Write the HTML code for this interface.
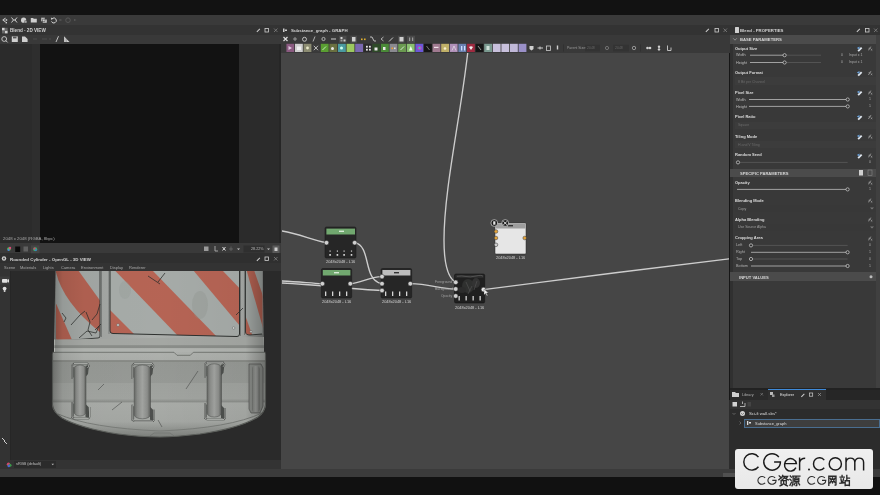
<!DOCTYPE html>
<html><head><meta charset="utf-8">
<style>
*{margin:0;padding:0;box-sizing:border-box}
html,body{width:880px;height:495px;overflow:hidden;background:#161616;font-family:"Liberation Sans",sans-serif;color:#c8c8c8}
.a{position:absolute}
.t{position:absolute;white-space:nowrap;will-change:transform;font-size:4px;line-height:5px}
.b{font-weight:bold}
</style></head><body>
<!-- top title bar -->
<div class="a" style="left:0;top:0;width:880px;height:15px;background:#121212"></div>
<!-- main toolbar -->
<div class="a" style="left:0;top:15px;width:880px;height:10px;background:#3a3a3a"></div>

<!-- LEFT PANEL -->
<div class="a" style="left:0;top:25px;width:281px;height:10px;background:#333"></div>
<div class="a" style="left:0;top:35px;width:281px;height:9px;background:#393939"></div>
<div class="a" style="left:0;top:44px;width:281px;height:199px;background:#2b2b2b"></div><div class="a" style="left:32px;top:44px;width:8px;height:199px;background:#2e2e2e"></div><div class="a" style="left:278.8px;top:44px;width:2.2px;height:199px;background:#262626"></div>
<div class="a" style="left:40px;top:44px;width:199px;height:199px;background:#121212"></div>
<div class="a" style="left:0;top:243px;width:281px;height:10px;background:#3a3a3a"></div>
<div class="a" style="left:0;top:253px;width:281px;height:10px;background:#2f2f2f"></div>
<div class="a" style="left:0;top:263px;width:281px;height:8px;background:#333"></div>
<div class="a" style="left:0;top:271px;width:281px;height:189px;background:#2a2a2a"></div>
<div class="a" style="left:0;top:271px;width:10px;height:189px;background:#353535"></div>
<div class="a" style="left:0;top:459.5px;width:281px;height:10px;background:#333"></div>


<!-- 3D viewport content -->
<svg class="a" style="left:0;top:271px" width="281" height="189" viewBox="0 271 281 189">
<defs>
<linearGradient id="cylH" x1="52" x2="267" y1="0" y2="0" gradientUnits="userSpaceOnUse">
<stop offset="0" stop-color="#7d807d"/><stop offset="0.06" stop-color="#9ea19e"/><stop offset="0.45" stop-color="#b0b3b0"/><stop offset="0.88" stop-color="#aaadaa"/><stop offset="1" stop-color="#7a7d7a"/>
</linearGradient>
<linearGradient id="shadeH" x1="52" x2="267" y1="0" y2="0" gradientUnits="userSpaceOnUse">
<stop offset="0" stop-color="#000" stop-opacity="0.3"/><stop offset="0.05" stop-color="#000" stop-opacity="0.1"/><stop offset="0.15" stop-color="#000" stop-opacity="0.04"/><stop offset="0.5" stop-color="#000" stop-opacity="0.03"/><stop offset="0.9" stop-color="#000" stop-opacity="0.06"/><stop offset="1" stop-color="#000" stop-opacity="0.3"/>
</linearGradient>
<linearGradient id="baseV" x1="0" x2="0" y1="352" y2="437" gradientUnits="userSpaceOnUse">
<stop offset="0" stop-color="#b3b6b2"/><stop offset="0.1" stop-color="#b0b3af"/><stop offset="0.11" stop-color="#999c98"/><stop offset="0.36" stop-color="#9b9e9a"/><stop offset="0.37" stop-color="#a3a6a2"/><stop offset="0.55" stop-color="#a5a8a4"/><stop offset="0.585" stop-color="#8e918d"/><stop offset="0.6" stop-color="#adb0ac"/><stop offset="0.82" stop-color="#a9aca8"/><stop offset="0.86" stop-color="#a0a39f"/><stop offset="1" stop-color="#7f827e"/>
</linearGradient>
<linearGradient id="bar" x1="0" x2="1" y1="0" y2="0">
<stop offset="0" stop-color="#6a6c69"/><stop offset="0.2" stop-color="#8e908d"/><stop offset="0.5" stop-color="#a6a8a5"/><stop offset="0.8" stop-color="#8f918e"/><stop offset="1" stop-color="#5e605d"/>
</linearGradient>
<clipPath id="cpC"><path d="M110 270 H239.5 V334 Q239.5 336.5 237 336.5 L113 333.5 Q110 333.5 110 331 Z"/></clipPath>
<clipPath id="cpL"><path d="M56 270 H100 V336 Q100 338 98 338 L60 341 Q56 341 56 338 Z"/></clipPath>
<clipPath id="cpR"><path d="M245.5 270 H262.5 V334 L250 335 Q245.5 335 245.5 332 Z"/></clipPath>
</defs>
<rect x="0" y="271" width="281" height="190" fill="#2a2a2a"/>
<rect x="0" y="271" width="10" height="190" fill="#333"/>
<rect x="10" y="271" width="1" height="190" fill="#262626"/>
<rect x="0" y="276.5" width="9.5" height="8" fill="#3c3c3c"/><rect x="2" y="279" width="5.5" height="3.8" rx="0.8" fill="#e0e0e0"/><path d="M7.5 280 L9 279 V282.8 L7.5 281.8Z" fill="#e0e0e0"/>
<circle cx="4.6" cy="288.6" r="1.9" fill="#e0e0e0"/><rect x="3.8" y="290" width="1.6" height="2" fill="#d0d0d0"/>
<path d="M2 438 L5 441 M4 441 L7 444" stroke="#cfcfcf" stroke-width="1"/>
<!-- upper body -->
<path d="M55.5 270 H262.5 L264 351 H54 Z" fill="url(#cylH)"/>
<!-- center panel -->
<g clip-path="url(#cpC)">
<rect x="105" y="270" width="140" height="70" fill="#abb0ad"/>
<path d="M114.5 270 L152 270 L218 338 L180 338 Z" fill="#bb6757"/>
<path d="M105 305 L140 340 L105 340 Z" fill="#bb6757"/>
<path d="M193 270 L222 270 L245 294 L245 332 Z" fill="#bb6757"/>
<ellipse cx="200" cy="305" rx="8" ry="14" fill="#959a96" opacity="0.35"/><ellipse cx="125" cy="290" rx="6" ry="9" fill="#959a96" opacity="0.25"/>
</g>
<path d="M110 270 V331 Q110 333.5 113 333.5 L237 336.5 Q239.5 336.5 239.5 334 V270" fill="none" stroke="#2f3230" stroke-width="1"/>
<!-- left panel -->
<g clip-path="url(#cpL)">
<rect x="50" y="270" width="55" height="75" fill="#a6aba8"/>
<path d="M55.5 270 L78 270 L101 302 L101 333 Q62 302 55.5 270 Z" fill="#b56353"/>
<path d="M54 299 L72 340 L54 342 Z" fill="#b56353"/>
</g>
<path d="M100 270 V336 Q100 338 98 338 L60 341" fill="none" stroke="#2f3230" stroke-width="0.9"/>
<!-- right panel -->
<g clip-path="url(#cpR)">
<rect x="244" y="270" width="20" height="70" fill="#a3a8a5"/>
<path d="M246.5 270 L254 270 L263 296 L263 328 Z" fill="#b56353"/>
<path d="M244 312 L254 340 L244 340 Z" fill="#b56353"/>
</g>
<path d="M245.5 270 V332 Q245.5 335 250 335 L262 334" fill="none" stroke="#2f3230" stroke-width="0.9"/>
<!-- seams grooves -->
<path d="M101.5 270 V337 M109 270 V334 M240.5 270 V336 M244.5 270 V335" stroke="#5d605e" stroke-width="0.6" fill="none"/>
<!-- rivets -->
<circle cx="118" cy="325" r="1.3" fill="#d8dbd8" stroke="#555" stroke-width="0.4"/>
<circle cx="233.6" cy="328" r="1.3" fill="#d8dbd8" stroke="#555" stroke-width="0.4"/>
<circle cx="251" cy="331.6" r="1.2" fill="#d8dbd8" stroke="#555" stroke-width="0.4"/>
<!-- cracks -->
<path d="M62 313 L66 318 L64 322 M71 325 L80 315 L85 311 M86 312 L90 322 L88 330 L92 336 M79 338 L87 331 L96 333 L99 326 M92 320 L97 314 L100 304 M95 330 L101 324 M148 276 L160 284 M158 282 L165 273 M236 315 L243 308" stroke="#2b2d2b" stroke-width="0.75" fill="none"/>
<!-- lip -->
<path d="M54 339.5 Q160 338 264 337 L264 352 H54 Z" fill="#a9aca8"/>
<rect x="54" y="345.2" width="210" height="3" fill="#8e918d"/>
<rect x="54" y="348.2" width="210" height="4" fill="#b6b9b5"/>
<!-- base -->
<path d="M52.5 354 Q52.5 352 55 352 H263 Q265.5 352 265.5 354 V405 Q265 412 258 417 Q240 428 200 434 Q175 437 160 437 Q140 437 118 434 Q80 428 62 418 Q53 412 52.5 405 Z" fill="url(#baseV)"/>
<path d="M52.5 352.3 H174 L177 355.3 H190.3 L193.3 352.3 H265.5" fill="none" stroke="#686b67" stroke-width="0.8"/>
<path d="M52.5 360.9 H265.5" stroke="#727571" stroke-width="0.9"/>
<path d="M58 414 Q90 428 160 431 Q230 428 262 413" fill="none" stroke="#7d807c" stroke-width="1"/>
<path d="M150 436 L154 433 H170 L174 436" fill="none" stroke="#6f726f" stroke-width="0.6"/>
<path d="M52.5 354 V405 Q53 412 62 418 Q80 428 118 434 Q140 437 160 437 Q175 437 200 434 Q240 428 258 417 Q265 412 265.5 405 V354" fill="none" stroke="#5e615d" stroke-width="1.1"/>
<!-- handle recesses -->
<path d="M85.5 366 L89 365 L88 374 L85.5 377 Z" fill="#4f524f"/>
<path d="M85.5 404 L88.5 407 L89.5 418 L85.5 417 Z" fill="#4f524f"/>
<path d="M72 367 L74 367 L74 377 L72 379 Z" fill="#6e716d"/>
<path d="M72 402 L74 404 L74 416 L72 418 Z" fill="#6e716d"/>
<path d="M72 379 V365.5 L74 363.5 H87.5 L89 366 L87.5 368" fill="none" stroke="#3e403e" stroke-width="1.6"/>
<path d="M72 379 V365.5 L74 363.5 H87.5 L89 366 L87.5 368" fill="none" stroke="#c9cbc8" stroke-width="0.8"/>
<path d="M72 402 V417 L74 418.5 H88.5 L89.5 417 V407" fill="none" stroke="#3e403e" stroke-width="1.6"/>
<path d="M72 402 V417 L74 418.5 H88.5 L89.5 417 V407" fill="none" stroke="#c9cbc8" stroke-width="0.8"/>
<rect x="74" y="365" width="12.0" height="51.0" rx="6.0" ry="4.0" fill="url(#bar)" stroke="#4a4c4a" stroke-width="0.5"/>
<path d="M150.0 366 L153.5 365 L152.5 374 L150.0 377 Z" fill="#4f524f"/>
<path d="M150.0 406.8 L153.0 409.8 L154.0 420.8 L150.0 419.8 Z" fill="#4f524f"/>
<path d="M132.2 367 L134.2 367 L134.2 377 L132.2 379 Z" fill="#6e716d"/>
<path d="M132.2 404.8 L134.2 406.8 L134.2 418.8 L132.2 420.8 Z" fill="#6e716d"/>
<path d="M132.2 379 V365.5 L134.2 363.5 H152.0 L153.5 366 L152.0 368" fill="none" stroke="#3e403e" stroke-width="1.6"/>
<path d="M132.2 379 V365.5 L134.2 363.5 H152.0 L153.5 366 L152.0 368" fill="none" stroke="#c9cbc8" stroke-width="0.8"/>
<path d="M132.2 404.8 V419.8 L134.2 421.3 H153.0 L154.0 419.8 V409.8" fill="none" stroke="#3e403e" stroke-width="1.6"/>
<path d="M132.2 404.8 V419.8 L134.2 421.3 H153.0 L154.0 419.8 V409.8" fill="none" stroke="#c9cbc8" stroke-width="0.8"/>
<rect x="134.2" y="365" width="16.3" height="53.8" rx="8.2" ry="4.0" fill="url(#bar)" stroke="#4a4c4a" stroke-width="0.5"/>
<path d="M221.0 364.8 L224.5 363.8 L223.5 372.8 L221.0 375.8 Z" fill="#4f524f"/>
<path d="M221.0 405 L224.0 408 L225.0 419 L221.0 418 Z" fill="#4f524f"/>
<path d="M205 365.8 L207 365.8 L207 375.8 L205 377.8 Z" fill="#6e716d"/>
<path d="M205 403 L207 405 L207 417 L205 419 Z" fill="#6e716d"/>
<path d="M205 377.8 V364.3 L207 362.3 H223.0 L224.5 364.8 L223.0 366.8" fill="none" stroke="#3e403e" stroke-width="1.6"/>
<path d="M205 377.8 V364.3 L207 362.3 H223.0 L224.5 364.8 L223.0 366.8" fill="none" stroke="#c9cbc8" stroke-width="0.8"/>
<path d="M205 403 V418 L207 419.5 H224.0 L225.0 418 V408" fill="none" stroke="#3e403e" stroke-width="1.6"/>
<path d="M205 403 V418 L207 419.5 H224.0 L225.0 418 V408" fill="none" stroke="#c9cbc8" stroke-width="0.8"/>
<rect x="207" y="363.8" width="14.5" height="53.2" rx="7.2" ry="4.0" fill="url(#bar)" stroke="#4a4c4a" stroke-width="0.5"/>
<path d="M249 364 H261 L263 368 V406 L260 413 H251 L249 409 Z" fill="#8d908c" stroke="#4a4c4a" stroke-width="0.6"/><rect x="252" y="366" width="7.5" height="46" rx="3" fill="url(#bar)" opacity="0.8"/>
<path d="M98 390 L104 384 M186 389 L198 371 M112 410 L122 402 M158 420 L162 427" stroke="#4b4d4b" stroke-width="0.6"/>
<clipPath id="cylClip"><path d="M55.5 270 H262.5 L264 352 H55 Z"/><path d="M52.5 354 Q52.5 352 55 352 H263 Q265.5 352 265.5 354 V405 Q265 412 258 417 Q240 428 200 434 Q175 437 160 437 Q140 437 118 434 Q80 428 62 418 Q53 412 52.5 405 Z"/></clipPath>
<rect x="50" y="270" width="218" height="170" fill="url(#shadeH)" clip-path="url(#cylClip)"/>
</svg>


<!-- left panel texts/icons -->
<div class="t b" style="left:10px;top:27.8px;font-size:4.6px;color:#d2d2d2">Blend - 2D VIEW</div>
<svg class="a" style="left:0;top:15px" width="281" height="29" viewBox="0 15 281 29">
<g fill="#cfcfcf">
<rect x="2" y="27.8" width="2.8" height="2.8"/><rect x="4.8" y="30.6" width="2.8" height="2.8"/><rect x="2" y="30.6" width="2.8" height="2.8" fill="#666"/><rect x="4.8" y="27.8" width="2.8" height="2.8" fill="#666"/>
<!-- main toolbar icons -->
<path d="M2.2 20 L5.5 17.6 V18.8 L3.8 20 L5.5 21.2 V22.4 Z" /><rect x="5.6" y="19.2" width="1.6" height="1.6"/><rect x="5.6" y="22" width="1.4" height="1.4"/>
<path d="M11.5 17.5 L13.5 20 L11.5 22.5 M17 17.5 L15 20 L17 22.5 M13.5 20 H15" stroke="#cfcfcf" stroke-width="1" fill="none"/>
<circle cx="23.6" cy="20.2" r="2.6"/><rect x="24.5" y="20.5" width="2.6" height="2.6" fill="#3a3a3a"/><path d="M25.8 20.8 V23 M24.7 21.9 H26.9" stroke="#cfcfcf" stroke-width="0.7"/>
<path d="M30.8 18 H33 L33.8 18.8 H36.8 V22.6 H30.8 Z"/>
<path d="M41 17.6 H45 V21.6 H41 Z M42.5 19.2 H47 V23 H42.5 Z" stroke="#3a3a3a" stroke-width="0.5"/>
<path d="M52.2 18.6 A2.5 2.5 0 1 1 51.5 21.4" fill="none" stroke="#cfcfcf" stroke-width="1"/><path d="M50.8 17.6 L53.2 18.4 L51.4 20 Z"/>
<!-- 2D toolbar icons -->
<circle cx="4.2" cy="39" r="2.4" fill="none" stroke="#cfcfcf" stroke-width="0.9"/><path d="M5.8 40.6 L7.6 42.4" stroke="#cfcfcf" stroke-width="1"/>
<rect x="11.8" y="36.4" width="6" height="5.6"/><rect x="13" y="36.6" width="3.5" height="1.8" fill="#555"/>
<path d="M22 36.5 H25 L27.6 39 V42 H22 Z"/>
<path d="M56 42 L58.5 36.2" stroke="#cfcfcf" stroke-width="0.9"/>
<path d="M64 36.2 V42 H69.5 Z"/><path d="M65 37.5 V42 M66.5 39 V42" stroke="#888" stroke-width="0.5"/>
<!-- header right icons -->
<path d="M256.5 31.5 L259.5 28.5 L260.2 29.2 L257.2 32.2Z"/>
<rect x="265" y="28.5" width="3.5" height="3.5" fill="none" stroke="#cfcfcf" stroke-width="0.8"/>
</g>
<g fill="#5a5a5a"><path d="M59.5 19 L62.4 20 L59.5 21Z"/><circle cx="68" cy="20.2" r="2.3" fill="none" stroke="#5a5a5a" stroke-width="0.9"/><path d="M74 19 L76.5 20 L74 21Z"/><path d="M33 39 H37 M42 39 H47 M49 39 H51" stroke="#505050" stroke-width="0.8"/></g>
<path d="M274 28.5 L277.5 32 M277.5 28.5 L274 32" stroke="#999" stroke-width="0.6"/>
</svg>
<div class="t" style="left:3px;top:235.5px;font-size:4.3px;color:#a8a8a8">2048 x 2048 (RGBA, 8bpc)</div>
<svg class="a" style="left:0;top:243px" width="281" height="27" viewBox="0 243 281 27"><g transform="translate(0 1)">
<circle cx="9" cy="248" r="1.8" fill="#5ac35a"/><circle cx="10" cy="247" r="1.2" fill="#e04a7a"/><circle cx="8.5" cy="249" r="1" fill="#4a7ae0"/>
<rect x="15.2" y="245.5" width="5" height="5.5" fill="#0a0a0a"/>
<rect x="23.5" y="245.5" width="4.5" height="5" fill="#606060"/>
<rect x="31" y="244.3" width="8.5" height="8" fill="#454545"/><circle cx="35.2" cy="248.3" r="2" fill="#3ab06a"/><circle cx="34.5" cy="247.6" r="1.1" fill="#d04a6a"/><circle cx="35.8" cy="249" r="1" fill="#3a7ad0"/>
<rect x="204" y="245.5" width="4.5" height="4.5" fill="#9a9a9a"/>
<path d="M215 245 V250 H218" stroke="#bbb" stroke-width="0.8" fill="none"/>
<path d="M222.5 246 L225.5 249.5 M225.5 246 L222.5 249.5" stroke="#ddd" stroke-width="1"/>
<path d="M231 245.5 V250 M229 248 H233" stroke="#777" stroke-width="0.6"/>
<path d="M237 247.5 L240 247.5 L238.5 249Z" fill="#ccc"/>
<rect x="243.5" y="244.5" width="21" height="7" fill="#2f2f2f"/>
<path d="M267 247.5 L270 247.5 L268.5 249Z" fill="#ccc"/>
<rect x="272.5" y="244.5" width="7" height="7.5" fill="#5a5a5a"/><rect x="274.5" y="246.5" width="3" height="3.5" fill="#ccc"/>
</g><circle cx="4" cy="258.5" r="2.2" fill="#d0d0d0"/><circle cx="4" cy="258.5" r="0.9" fill="#444"/>
<path d="M256.5 260.5 L259.5 257.5 L260.2 258.2 L257.2 261.2Z" fill="#cfcfcf"/>
<rect x="265" y="257" width="3.5" height="3.5" fill="none" stroke="#cfcfcf" stroke-width="0.8"/>
<path d="M274 257 L277.5 260.5 M277.5 257 L274 260.5" stroke="#999" stroke-width="0.6"/>
</svg>
<div class="t" style="left:251px;top:246.6px;font-size:3.7px;color:#bbb">28.22%</div>
<div class="t b" style="left:10px;top:256.7px;font-size:4.4px;color:#d2d2d2">Rounded Cylinder - OpenGL - 3D VIEW</div>
<div class="t" style="left:3.5px;top:265.1px;font-size:4px;color:#a8a8a8">Scene</div>
<div class="t" style="left:20px;top:265.1px;font-size:4px;color:#a8a8a8">Materials</div>
<div class="t" style="left:43px;top:265.1px;font-size:4px;color:#a8a8a8">Lights</div>
<div class="t" style="left:61px;top:265.1px;font-size:4px;color:#a8a8a8">Camera</div>
<div class="t" style="left:81px;top:265.1px;font-size:4px;color:#a8a8a8">Environment</div>
<div class="t" style="left:110px;top:265.1px;font-size:4px;color:#a8a8a8">Display</div>
<div class="t" style="left:129px;top:265.1px;font-size:4px;color:#a8a8a8">Renderer</div>


<svg class="a" style="left:0;top:460px" width="60" height="9" viewBox="0 460 60 9">
<circle cx="8.5" cy="464.3" r="1.7" fill="#d04a6a"/><circle cx="10" cy="465.2" r="1.5" fill="#3a9a4a"/><circle cx="8.8" cy="466" r="1.3" fill="#4a6ad0"/>
<rect x="14" y="461" width="42" height="7" fill="#2b2b2b"/>
<path d="M51.5 463.8 L54 463.8 L52.75 465.2Z" fill="#bbb"/>
</svg>
<div class="t" style="left:16px;top:461.8px;font-size:3.8px;color:#c0c0c0">sRGB (default)</div>

<!-- GRAPH PANEL -->
<div class="a" style="left:281px;top:25px;width:449px;height:10px;background:#333"></div>
<div class="a" style="left:281px;top:35px;width:449px;height:18px;background:#393939"></div>
<div class="a" style="left:281px;top:53px;width:448px;height:416px;background:#464646"></div>



<!-- graph header & toolbars -->
<div class="t b" style="left:291px;top:28px;font-size:4.4px;color:#d2d2d2">Substance_graph - GRAPH</div>
<svg class="a" style="left:282px;top:25px" width="447" height="28" viewBox="282 25 447 28">
<rect x="283" y="28.5" width="1.5" height="3.5" fill="#ccc"/><rect x="285" y="29.5" width="2" height="1.5" fill="#ccc"/>
<path d="M705.5 31.5 L708.5 28.5 L709.2 29.2 L706.2 32.2Z" fill="#cfcfcf"/>
<rect x="715" y="28.5" width="3.5" height="3.5" fill="none" stroke="#cfcfcf" stroke-width="0.8"/>
<path d="M723.5 28.5 L727 32 M727 28.5 L723.5 32" stroke="#999" stroke-width="0.6"/>
<rect x="339" y="35.8" width="7.5" height="7" fill="#4a4a4a"/><rect x="350.5" y="35.8" width="6.5" height="7" fill="#4a4a4a"/>
<rect x="398" y="35.8" width="6.5" height="7" fill="#4a4a4a"/><rect x="407" y="35.8" width="8" height="7" fill="#4a4a4a"/>
<g fill="#cfcfcf">
<path d="M283.5 37 L287.5 41 M287.5 37 L283.5 41" stroke="#ddd" stroke-width="1.2"/>
<path d="M293 39 H297 M295 37 V41" stroke="#aaa" stroke-width="0.8"/>
<circle cx="304.5" cy="39.3" r="2" fill="none" stroke="#ccc" stroke-width="0.9"/>
<path d="M313 41.5 L315 36.5" stroke="#ccc" stroke-width="0.8"/>
<circle cx="323.5" cy="39" r="1.6" fill="none" stroke="#ccc" stroke-width="0.8"/>
<path d="M331 39 H336" stroke="#ccc" stroke-width="1"/>
<rect x="340.5" y="37" width="2" height="2"/><rect x="343.5" y="39.5" width="2" height="2"/><rect x="340.5" y="39.5" width="2" height="2" fill="#999"/>
<rect x="352" y="37" width="3.5" height="4.5"/>
<rect x="361" y="38.5" width="1.6" height="1.6" fill="#e0b030"/><rect x="364" y="38.5" width="1.6" height="1.6" fill="#e0b030"/>
<path d="M370 37 L372 37 L374 41 L376 41" stroke="#ccc" stroke-width="0.9" fill="none"/>
<path d="M381 39 L383.5 37 M381 39 L383.5 41" stroke="#bbb" stroke-width="0.9" fill="none"/>
<path d="M389 41.5 L393 37.5" stroke="#ccc" stroke-width="1"/>
<rect x="399.5" y="37" width="4" height="4.5"/>
<rect x="409" y="37.5" width="1.2" height="3.5" fill="#999"/><rect x="412" y="37.5" width="1.2" height="3.5" fill="#999"/>
</g>
<rect x="286.4" y="43.8" width="7.8" height="8.2" fill="#8a5a80"/><rect x="295.0" y="43.8" width="7.8" height="8.2" fill="#cfcfcf"/><rect x="303.6" y="43.8" width="7.8" height="8.2" fill="#8c8c72"/><rect x="312.2" y="43.8" width="7.8" height="8.2" fill="#3a3a3a"/><rect x="320.8" y="43.8" width="7.8" height="8.2" fill="#5a9e32"/><rect x="329.4" y="43.8" width="7.8" height="8.2" fill="#6a7040"/><rect x="338.0" y="43.8" width="7.8" height="8.2" fill="#4a9aa0"/><rect x="346.6" y="43.8" width="7.8" height="8.2" fill="#9cc860"/><rect x="355.2" y="43.8" width="7.8" height="8.2" fill="#7a68b0"/><rect x="363.8" y="43.8" width="7.8" height="8.2" fill="#2a2a2a"/><rect x="372.4" y="43.8" width="7.8" height="8.2" fill="#2e4a28"/><rect x="381.0" y="43.8" width="7.8" height="8.2" fill="#4a8a38"/><rect x="389.6" y="43.8" width="7.8" height="8.2" fill="#8a8a90"/><rect x="398.2" y="43.8" width="7.8" height="8.2" fill="#6a9a50"/><rect x="406.8" y="43.8" width="7.8" height="8.2" fill="#8ac070"/><rect x="415.4" y="43.8" width="7.8" height="8.2" fill="#6a58d8"/><rect x="424.0" y="43.8" width="7.8" height="8.2" fill="#151515"/><rect x="432.6" y="43.8" width="7.8" height="8.2" fill="#a07a90"/><rect x="441.2" y="43.8" width="7.8" height="8.2" fill="#c0b068"/><rect x="449.8" y="43.8" width="7.8" height="8.2" fill="#b090b8"/><rect x="458.4" y="43.8" width="7.8" height="8.2" fill="#6a80b0"/><rect x="467.0" y="43.8" width="7.8" height="8.2" fill="#a02a40"/><rect x="475.6" y="43.8" width="7.8" height="8.2" fill="#151515"/><rect x="484.2" y="43.8" width="7.8" height="8.2" fill="#7a9a90"/><rect x="492.8" y="43.8" width="7.8" height="8.2" fill="#c8c0dc"/><rect x="501.4" y="43.8" width="7.8" height="8.2" fill="#c8c0dc"/><rect x="510.0" y="43.8" width="7.8" height="8.2" fill="#c0b8d8"/><rect x="518.6" y="43.8" width="7.8" height="8.2" fill="#9a90c8"/>
<g fill="#e8e8e8">
<path d="M288.5 46 L292 48 L288.5 50Z" fill="#e0c8e0"/><rect x="297" y="46.5" width="4" height="3.5" fill="#f0f0f0"/><circle cx="307.5" cy="48" r="1.4" fill="#e8e8c8"/>
<path d="M313.8 45.8 L318 50.2 M318 45.8 L313.8 50.2" stroke="#ddd" stroke-width="0.8"/>
<path d="M322.5 50 L326 46.5" stroke="#dfd" stroke-width="0.8"/><circle cx="332.5" cy="48.5" r="1.5"/><circle cx="341.5" cy="48" r="1.5" fill="#cfe"/>
<rect x="366" y="45.8" width="1.8" height="1.8"/><rect x="369" y="45.8" width="1.8" height="1.8"/><rect x="366" y="48.8" width="1.8" height="1.8"/><rect x="369" y="48.8" width="1.8" height="1.8"/>
<rect x="374.5" y="47.5" width="3" height="3"/><rect x="383" y="47" width="2.5" height="3"/>
<rect x="391.5" y="47.5" width="1.6" height="1.6" fill="#f0a030"/><rect x="394" y="47.5" width="1.6" height="1.6" fill="#ddd"/>
<path d="M400.5 50 L404 46.5" stroke="#efe" stroke-width="0.8"/><path d="M409 50.5 L410.8 46 L412.6 50.5Z" fill="#efe"/>
<circle cx="419.5" cy="48" r="2.3" fill="#c040c0"/><circle cx="419.5" cy="48" r="1.2" fill="#40c0c0"/>
<path d="M426.5 46 L429.5 50" stroke="#bbb" stroke-width="0.6"/>
<rect x="434" y="46.8" width="4.5" height="1.2" fill="#f0e0e8"/>
<circle cx="445" cy="48.5" r="1.3" fill="#f8f0d0"/><path d="M452 50.5 L454 46 L456 50.5" stroke="#eee" stroke-width="0.6" fill="none"/>
<rect x="461" y="46" width="1.3" height="4.5" fill="#cdf"/><rect x="464" y="46" width="1.3" height="4.5" fill="#cdf"/>
<path d="M469 47 Q471 45.5 473 47 L471 50Z" fill="#f0f0f0"/><path d="M478 46 L481 50" stroke="#ccc" stroke-width="0.7"/>
<rect x="486.5" y="46" width="3" height="4" fill="#cfe0d8"/>
</g>
<g fill="#d0d0d0">
<path d="M529.5 46 H533.5 V49 L531.5 50.5 L529.5 49Z"/>
<path d="M537.5 48 H543 M540 46.5 V49.5" stroke="#ccc" stroke-width="1"/>
<rect x="546.5" y="46" width="4" height="4.5" fill="none" stroke="#ccc" stroke-width="0.8"/>
<rect x="556.8" y="45.5" width="1.4" height="4"/>
<circle cx="607" cy="48" r="1.6" fill="none" stroke="#888" stroke-width="0.7"/>
<circle cx="634" cy="48" r="1.7" fill="none" stroke="#aaa" stroke-width="0.8"/>
<circle cx="647.5" cy="48" r="1.3"/><circle cx="650" cy="48" r="1.3"/>
<circle cx="659" cy="46.7" r="1.2"/><circle cx="659" cy="49.4" r="1.2"/>
<path d="M667.5 45.5 V50.5 H671 V47.5" stroke="#ccc" stroke-width="0.9" fill="none"/>
</g>
<rect x="563.5" y="44.5" width="0.5" height="7" fill="#2a2a2a"/>
<rect x="585" y="44.8" width="15" height="6.5" fill="#333"/>
<rect x="613" y="44.8" width="16" height="6.5" fill="#333"/>
<rect x="640.5" y="44.5" width="0.5" height="7" fill="#2a2a2a"/>
</svg>
<div class="t" style="left:567px;top:46px;font-size:3.5px;color:#9a9a9a">Parent Size:</div>
<div class="t" style="left:587px;top:46px;font-size:3.5px;color:#666">2048</div>
<div class="t" style="left:615px;top:46px;font-size:3.5px;color:#666">2048</div>

<!-- graph content -->
<svg class="a" style="left:282px;top:53px" width="447" height="416" viewBox="282 53 447 416">
<g fill="none" stroke="#cdcdcd" stroke-width="1.35" stroke-linecap="round">
<path d="M282 231 C300 234 312 240 326.5 242.7"/>
<path d="M282 281 C300 282 310 283 322.4 283.7"/>
<path d="M282 283 C320 285 350 289 382 290.5"/>
<path d="M354.7 242.7 C372 246 362 280 382 283.7"/>
<path d="M350.3 283.7 C362 283 368 277 382 276.6"/>
<path d="M410.3 283.7 C430 284 440 289 455.7 289"/>
<path d="M467.7 53 C460 120 444 190 444 240 C444 265 448 278 455.7 282.3"/>
<path d="M483.5 289.6 C560 280 650 268 729 258.8"/>
</g>
<!-- node A -->
<rect x="325" y="227" width="31" height="31" rx="1.5" fill="#262626" stroke="#1b1b1b" stroke-width="0.6"/>
<rect x="326.4" y="228.6" width="28.6" height="5.9" fill="#71a86f"/>
<rect x="339" y="230.6" width="5" height="1.4" fill="#d9ead8"/>
<!-- node B -->
<rect x="321.4" y="268.5" width="30.3" height="29.5" rx="1.5" fill="#262626" stroke="#1b1b1b" stroke-width="0.6"/>
<rect x="322.8" y="270" width="27.6" height="5.5" fill="#71a86f"/>
<rect x="334" y="272" width="5" height="1.4" fill="#d9ead8"/>
<!-- node C -->
<rect x="381" y="268.5" width="30.7" height="29.5" rx="1.5" fill="#262626" stroke="#1b1b1b" stroke-width="0.6"/>
<rect x="382.4" y="270" width="28" height="5.5" fill="#bcbcbc"/>
<rect x="394" y="272" width="5" height="1.4" fill="#333"/>
<!-- node D -->
<rect x="454.5" y="274" width="30.2" height="29" rx="1.5" fill="#1f1f1f" stroke="#161616" stroke-width="0.6"/>
<rect x="455.5" y="274.8" width="28" height="3" fill="#2e2e2e"/>
<path d="M457 276.3 Q462 275.5 466 276.5 T476 276 T483 276.5" stroke="#777" stroke-width="0.5" fill="none"/>
<ellipse cx="468" cy="286" rx="6" ry="7" fill="#2f302f"/><ellipse cx="476" cy="283" rx="4" ry="5" fill="#333"/><ellipse cx="462" cy="290" rx="4" ry="3" fill="#2c2c2c"/>
<path d="M466 282 L470 291 M472 286 L468 294 M477 281 L474 290" stroke="#555" stroke-width="0.6" fill="none"/>
<!-- node E -->
<rect x="495" y="223" width="31" height="31" rx="1" fill="#e6e6e6" stroke="#2a2a2a" stroke-width="0.5"/>
<rect x="495.5" y="223.5" width="30" height="5" fill="#9e9e9e"/>
<rect x="508" y="225" width="5" height="1.4" fill="#333"/>
<!-- node bottoms icons -->
<g fill="#d5d5d5">
<rect x="329.5" y="250.5" width="1.2" height="1.2"/><rect x="336.8" y="250.5" width="1.2" height="1.2"/><rect x="343.5" y="250.5" width="1.2" height="1.2"/><rect x="350.9" y="250.5" width="1.2" height="1.2"/>
<rect x="329.3" y="254" width="1.6" height="1.8"/><rect x="336.6" y="254" width="1.6" height="1.8"/><rect x="343.3" y="254" width="1.6" height="1.8"/><rect x="350.7" y="254" width="1.6" height="1.8"/>
<rect x="325" y="291.5" width="1.3" height="4.5"/><rect x="332" y="291.5" width="1.3" height="4.5"/><rect x="339" y="291.5" width="1.3" height="4.5"/><rect x="346" y="291.5" width="1.3" height="4.5"/>
<rect x="385" y="291.5" width="1.3" height="4.5"/><rect x="392" y="291.5" width="1.3" height="4.5"/><rect x="399" y="291.5" width="1.3" height="4.5"/><rect x="406" y="291.5" width="1.3" height="4.5"/>
<rect x="458.5" y="296" width="1.3" height="4.5"/><rect x="465.5" y="296" width="1.3" height="4.5"/><rect x="472.5" y="296" width="1.3" height="4.5"/><rect x="479.5" y="296" width="1.3" height="4.5"/>
</g>
<!-- ports -->
<g fill="#d0d0d0" stroke="#2a2a2a" stroke-width="0.5">
<circle cx="326.5" cy="242.7" r="2.3"/><circle cx="354.7" cy="242.7" r="2.3"/>
<circle cx="322.4" cy="283.7" r="2.3"/><circle cx="350.3" cy="283.7" r="2.3"/>
<circle cx="382" cy="276.6" r="2.3"/><circle cx="382" cy="283.7" r="2.3"/><circle cx="382" cy="290.5" r="2.3"/><circle cx="410.3" cy="283.7" r="2.3"/>
<circle cx="455.7" cy="282.3" r="2.3"/><circle cx="455.7" cy="289" r="2.3"/><circle cx="455.7" cy="296" r="2.3"/>
<circle cx="496" cy="244.8" r="1.8"/>
</g>
<g fill="#e3a33a" stroke="#3a3a3a" stroke-width="0.5">
<circle cx="496" cy="231.5" r="1.8"/><circle cx="496" cy="238" r="1.8"/><circle cx="524.7" cy="238" r="1.8"/>
</g>
<circle cx="483.5" cy="289.6" r="2.3" fill="#e8e8e8" stroke="#3a3a3a" stroke-width="0.6"/><path d="M484 289 L484 295 L485.5 293.5 L487 296 L487.8 295.6 L486.5 293 L488.5 293 Z" fill="#f0f0f0" stroke="#222" stroke-width="0.3"/>
<circle cx="494.3" cy="223" r="3.4" fill="#1a1a1a" stroke="#d8d8d8" stroke-width="0.7"/>
<circle cx="505.2" cy="223" r="3.4" fill="#1a1a1a" stroke="#d8d8d8" stroke-width="0.7"/>
<rect x="493.2" y="221.3" width="2.2" height="3.4" fill="#e5e5e5"/>
<path d="M503.5 221.3 L507 224.8 M507 221.3 L503.5 224.8" stroke="#e5e5e5" stroke-width="1"/>
</svg>
<div class="t" style="left:326px;top:258.5px;font-size:3.9px;color:#d2d2d2">2048x2048 - L16</div>
<div class="t" style="left:322px;top:298.7px;font-size:3.9px;color:#d2d2d2">2048x2048 - L16</div>
<div class="t" style="left:382px;top:298.7px;font-size:3.9px;color:#d2d2d2">2048x2048 - L16</div>
<div class="t" style="left:455px;top:304.5px;font-size:3.9px;color:#d2d2d2">2048x2048 - L16</div>
<div class="t" style="left:496px;top:255px;font-size:3.9px;color:#d2d2d2">2048x2048 - L16</div>
<div class="t" style="left:434.5px;top:280.3px;font-size:3.3px;color:#a0a0a0">Foreground</div>
<div class="t" style="left:434.5px;top:287px;font-size:3.3px;color:#a0a0a0">Background</div>
<div class="t" style="left:440.5px;top:293.8px;font-size:3.3px;color:#a0a0a0">Opacity</div>

<!-- RIGHT PANEL -->
<div class="a" style="left:730px;top:25px;width:150px;height:10px;background:#333"></div>
<div class="a" style="left:730px;top:35px;width:150px;height:353px;background:#393939"></div><div class="a" style="left:876px;top:35px;width:4px;height:353px;background:#404040"></div><div class="a" style="left:729.5px;top:35px;width:3px;height:353px;background:#303030"></div>
<div class="a" style="left:730px;top:388px;width:150px;height:2px;background:#222"></div>
<div class="a" style="left:730px;top:390px;width:150px;height:10px;background:#262626"></div>
<div class="a" style="left:729px;top:400px;width:151px;height:69px;background:#2c2c2c"></div>


<!-- properties content -->
<div class="t b" style="left:740px;top:28px;font-size:4.3px;color:#d0d0d0">Blend - PROPERTIES</div>
<div class="a" style="left:734.5px;top:27px;width:4px;height:5.5px;background:#cfcfcf;border-radius:0.5px"></div>
<div class="a" style="left:730px;top:35px;width:146px;height:8.5px;background:#4b4b4b"></div>
<div class="t b" style="left:739.5px;top:37.3px;font-size:4.2px;color:#d6d6d6">BASE PARAMETERS</div>

<div class="t b" style="left:735px;top:45.8px;font-size:4px;color:#dedede">Output Size</div>
<div class="t" style="left:736px;top:53.2px;font-size:3.8px;color:#bcbcbc">Width</div>
<div class="t" style="left:736px;top:60.5px;font-size:3.8px;color:#bcbcbc">Height</div>
<div class="t b" style="left:735px;top:70.3px;font-size:4px;color:#dedede">Output Format</div>
<div class="a" style="left:735px;top:77.4px;width:141px;height:8px;background:#3c3c3c"></div>
<div class="t" style="left:738px;top:79.5px;font-size:3.5px;color:#6a6a6a">8 Bit per Channel</div>
<div class="t b" style="left:735px;top:89.8px;font-size:4px;color:#dedede">Pixel Size</div>
<div class="t" style="left:736px;top:97.6px;font-size:3.8px;color:#bcbcbc">Width</div>
<div class="t" style="left:736px;top:104.6px;font-size:3.8px;color:#bcbcbc">Height</div>
<div class="t b" style="left:735px;top:114.3px;font-size:4px;color:#dedede">Pixel Ratio</div>
<div class="a" style="left:735px;top:121.6px;width:141px;height:7px;background:#3c3c3c"></div>
<div class="t" style="left:738px;top:123px;font-size:3.5px;color:#6a6a6a">Square</div>
<div class="t b" style="left:735px;top:133.6px;font-size:4px;color:#dedede">Tiling Mode</div>
<div class="a" style="left:735px;top:141px;width:141px;height:7px;background:#3c3c3c"></div>
<div class="t" style="left:738px;top:142.5px;font-size:3.5px;color:#6a6a6a">H and V Tiling</div>
<div class="t b" style="left:735px;top:152.3px;font-size:4px;color:#dedede">Random Seed</div>
<div class="a" style="left:730px;top:168.9px;width:146px;height:8.3px;background:#4b4b4b"></div>
<div class="t b" style="left:740px;top:171px;font-size:4.1px;color:#d6d6d6">SPECIFIC PARAMETERS</div>
<div class="t b" style="left:735px;top:179.5px;font-size:4px;color:#dedede">Opacity</div>
<div class="t b" style="left:735px;top:197.6px;font-size:4px;color:#dedede">Blending Mode</div>
<div class="a" style="left:735px;top:205.4px;width:141px;height:6.3px;background:#383838"></div>
<div class="t" style="left:738px;top:206.5px;font-size:3.5px;color:#a0a0a0">Copy</div>
<div class="t b" style="left:735px;top:216.5px;font-size:4px;color:#dedede">Alpha Blending</div>
<div class="a" style="left:735px;top:224px;width:141px;height:6.5px;background:#383838"></div>
<div class="t" style="left:738px;top:225.2px;font-size:3.5px;color:#a0a0a0">Use Source Alpha</div>
<div class="t b" style="left:735px;top:235.4px;font-size:4px;color:#dedede">Cropping Area</div>
<div class="t" style="left:735.5px;top:243.3px;font-size:3.8px;color:#b0b0b0">Left</div>
<div class="t" style="left:735.5px;top:250.2px;font-size:3.8px;color:#b0b0b0">Right</div>
<div class="t" style="left:735.5px;top:256.9px;font-size:3.8px;color:#b0b0b0">Top</div>
<div class="t" style="left:735.5px;top:263.9px;font-size:3.8px;color:#b0b0b0">Bottom</div>
<div class="a" style="left:730px;top:272.3px;width:146px;height:8.9px;background:#4b4b4b"></div>
<div class="t b" style="left:739.4px;top:274.7px;font-size:4.1px;color:#d6d6d6">INPUT VALUES</div>
<svg class="a" style="left:730px;top:35px" width="150" height="250" viewBox="730 35 150 250">
<g stroke="#bdbdbd" stroke-width="0.8" fill="none">
<path d="M750 55.2 H784.6 M750 62.5 H784.6"/>
<path d="M749 99.5 H847.7 M749 106.4 H847.7"/>
<path d="M737 189.4 H847.6"/>
<path d="M751 252.3 H847.6 M751 266 H847.6"/>
</g>
<g stroke="#5a5a5a" stroke-width="0.8" fill="none">
<path d="M784.6 55.2 H821 M784.6 62.5 H821"/>
<path d="M738 162.4 H847.6"/>
<path d="M751 245.4 H847.6 M751 259 H847.6"/>
</g>
<g fill="#2e2e2e" stroke="#d8d8d8" stroke-width="0.7">
<circle cx="784.6" cy="55.2" r="1.6"/><circle cx="784.6" cy="62.5" r="1.6"/>
<circle cx="847.7" cy="99.5" r="1.6"/><circle cx="847.7" cy="106.4" r="1.6"/>
<circle cx="738" cy="162.4" r="1.6"/>
<circle cx="847.6" cy="189.4" r="1.6"/>
<circle cx="751" cy="245.4" r="1.6"/><circle cx="847.6" cy="252.3" r="1.6"/><circle cx="751" cy="259" r="1.6"/><circle cx="847.6" cy="266" r="1.6"/>
</g>
<g><path d="M857.5 50.5 L861 47.0 L862.3 48.3 L858.8 51.8 Z" fill="#dfe6ee"/><path d="M856.8 48.0 L859.5 46.5 L859.5 49.5 Z" fill="#6aa0d8"/><path d="M857.5 75.0 L861 71.5 L862.3 72.8 L858.8 76.3 Z" fill="#dfe6ee"/><path d="M856.8 72.5 L859.5 71.0 L859.5 74.0 Z" fill="#6aa0d8"/><path d="M857.5 94.5 L861 91.0 L862.3 92.3 L858.8 95.8 Z" fill="#dfe6ee"/><path d="M856.8 92.0 L859.5 90.5 L859.5 93.5 Z" fill="#6aa0d8"/><path d="M857.5 119.0 L861 115.5 L862.3 116.8 L858.8 120.3 Z" fill="#dfe6ee"/><path d="M856.8 116.5 L859.5 115.0 L859.5 118.0 Z" fill="#6aa0d8"/><path d="M857.5 138.5 L861 135.0 L862.3 136.3 L858.8 139.8 Z" fill="#dfe6ee"/><path d="M856.8 136.0 L859.5 134.5 L859.5 137.5 Z" fill="#6aa0d8"/><path d="M857.5 157.5 L861 154.0 L862.3 155.3 L858.8 158.8 Z" fill="#dfe6ee"/><path d="M856.8 155.0 L859.5 153.5 L859.5 156.5 Z" fill="#6aa0d8"/></g>
<g><path d="M868 50.0 Q869.5 50.3 869.7 48.5 Q869.9 46.7 871.3 46.9 M868.5 48.3 H870.8 M870.8 49.1 L872.3 50.5 M872.3 49.1 L870.8 50.5" stroke="#b8b8b8" stroke-width="0.55" fill="none"/><path d="M868 74.5 Q869.5 74.8 869.7 73.0 Q869.9 71.2 871.3 71.4 M868.5 72.8 H870.8 M870.8 73.6 L872.3 75.0 M872.3 73.6 L870.8 75.0" stroke="#b8b8b8" stroke-width="0.55" fill="none"/><path d="M868 94.0 Q869.5 94.3 869.7 92.5 Q869.9 90.7 871.3 90.9 M868.5 92.3 H870.8 M870.8 93.1 L872.3 94.5 M872.3 93.1 L870.8 94.5" stroke="#b8b8b8" stroke-width="0.55" fill="none"/><path d="M868 118.5 Q869.5 118.8 869.7 117.0 Q869.9 115.2 871.3 115.4 M868.5 116.8 H870.8 M870.8 117.6 L872.3 119.0 M872.3 117.6 L870.8 119.0" stroke="#b8b8b8" stroke-width="0.55" fill="none"/><path d="M868 138.0 Q869.5 138.3 869.7 136.5 Q869.9 134.7 871.3 134.9 M868.5 136.3 H870.8 M870.8 137.1 L872.3 138.5 M872.3 137.1 L870.8 138.5" stroke="#b8b8b8" stroke-width="0.55" fill="none"/><path d="M868 157.0 Q869.5 157.3 869.7 155.5 Q869.9 153.7 871.3 153.9 M868.5 155.3 H870.8 M870.8 156.1 L872.3 157.5 M872.3 156.1 L870.8 157.5" stroke="#b8b8b8" stroke-width="0.55" fill="none"/><path d="M868 184.0 Q869.5 184.3 869.7 182.5 Q869.9 180.7 871.3 180.9 M868.5 182.3 H870.8 M870.8 183.1 L872.3 184.5 M872.3 183.1 L870.8 184.5" stroke="#b8b8b8" stroke-width="0.55" fill="none"/><path d="M868 202.0 Q869.5 202.3 869.7 200.5 Q869.9 198.7 871.3 198.9 M868.5 200.3 H870.8 M870.8 201.1 L872.3 202.5 M872.3 201.1 L870.8 202.5" stroke="#b8b8b8" stroke-width="0.55" fill="none"/><path d="M868 221.0 Q869.5 221.3 869.7 219.5 Q869.9 217.7 871.3 217.9 M868.5 219.3 H870.8 M870.8 220.1 L872.3 221.5 M872.3 220.1 L870.8 221.5" stroke="#b8b8b8" stroke-width="0.55" fill="none"/><path d="M868 240.0 Q869.5 240.3 869.7 238.5 Q869.9 236.7 871.3 236.9 M868.5 238.3 H870.8 M870.8 239.1 L872.3 240.5 M872.3 239.1 L870.8 240.5" stroke="#b8b8b8" stroke-width="0.55" fill="none"/></g>
<g fill="#777"><path d="M870 207.5 L874 207.5 L872 209.5Z M870 226.5 L874 226.5 L872 228.5Z"/></g>
<rect x="859" y="170" width="4" height="5.5" fill="#d0d0d0"/><rect x="868" y="170" width="4" height="5.5" fill="none" stroke="#888" stroke-width="0.6"/>
<circle cx="871" cy="276.7" r="1.5" fill="#bbb"/>
</svg>
<div class="t" style="left:840.5px;top:53px;font-size:3.5px;color:#aaa">0</div>
<div class="t" style="left:849px;top:53px;font-size:3.5px;color:#aaa">Input x 1</div>
<div class="t" style="left:840.5px;top:60.3px;font-size:3.5px;color:#aaa">0</div>
<div class="t" style="left:849px;top:60.3px;font-size:3.5px;color:#aaa">Input x 1</div>
<div class="t" style="left:868.5px;top:97.3px;font-size:3.5px;color:#aaa">1</div>
<div class="t" style="left:868.5px;top:104.2px;font-size:3.5px;color:#aaa">1</div>
<div class="t" style="left:868.5px;top:160.2px;font-size:3.5px;color:#aaa">0</div>
<div class="t" style="left:868.5px;top:187.2px;font-size:3.5px;color:#aaa">1</div>
<div class="t" style="left:868.5px;top:243.2px;font-size:3.5px;color:#aaa">0</div>
<div class="t" style="left:868.5px;top:250.1px;font-size:3.5px;color:#aaa">1</div>
<div class="t" style="left:868.5px;top:256.8px;font-size:3.5px;color:#aaa">0</div>
<div class="t" style="left:868.5px;top:263.8px;font-size:3.5px;color:#aaa">1</div>


<!-- right header icons -->
<svg class="a" style="left:730px;top:25px" width="150" height="10" viewBox="730 25 150 10">
<path d="M856.5 31.5 L859.5 28.5 L860.2 29.2 L857.2 32.2Z" fill="#cfcfcf"/>
<rect x="865.5" y="28.5" width="3.5" height="3.5" fill="none" stroke="#cfcfcf" stroke-width="0.8"/>
<path d="M874 28.5 L877.5 32 M877.5 28.5 L874 32" stroke="#999" stroke-width="0.6"/>
<path d="M733.5 38 L735 39.5 L736.5 38" stroke="#aaa" stroke-width="0.6" fill="none"/>
</svg>
<svg class="a" style="left:730px;top:35px" width="10" height="10" viewBox="730 35 10 10">
<path d="M733.2 38.3 L735 40.2 L736.8 38.3" stroke="#aaa" stroke-width="0.7" fill="none"/>
</svg>
<!-- explorer -->
<div class="a" style="left:730px;top:390px;width:38px;height:10px;background:#2b2b2b"></div>
<div class="a" style="left:768px;top:389px;width:57.5px;height:11px;background:#303030;border-top:1px solid #3f8ad8"></div>
<div class="t" style="left:742px;top:393px;font-size:3.8px;color:#b0b0b0">Library</div>
<div class="t" style="left:780px;top:393px;font-size:3.8px;color:#e0e0e0">Explorer</div>
<div class="a" style="left:730px;top:400px;width:150px;height:9px;background:#333"></div>
<div class="t" style="left:748.5px;top:411.3px;font-size:4.3px;color:#dcdcdc">Sci-fi wall.sbs*</div>
<div class="a" style="left:744px;top:418.5px;width:136px;height:9.5px;background:#3e3e3e;border:0.8px solid #4a6e90"></div>
<div class="t" style="left:755px;top:421px;font-size:4px;color:#dedede">Substance_graph</div>
<svg class="a" style="left:730px;top:389px" width="150" height="45" viewBox="730 389 150 45">
<path d="M732 392 H735 L736 393 H739 V397 H732Z" fill="#cfcfcf"/>
<path d="M760.5 393 L763 395.5 M763 393 L760.5 395.5" stroke="#888" stroke-width="0.6"/>
<rect x="770" y="392" width="3" height="3" fill="#bbb"/><rect x="772" y="394.5" width="2.5" height="2.5" fill="#999"/>
<path d="M801 396.5 L804 393.5 L804.7 394.2 L801.7 397.2Z" fill="#cfcfcf"/>
<rect x="809.5" y="393" width="3.2" height="3.2" fill="none" stroke="#cfcfcf" stroke-width="0.7"/>
<path d="M818 393 L821 396 M821 393 L818 396" stroke="#aaa" stroke-width="0.6"/>
<rect x="732.5" y="402" width="4.5" height="4.5" fill="#d5d5d5"/>
<path d="M740 406.5 H745 V403 M742.5 404 V401.5" stroke="#ccc" stroke-width="0.8" fill="none"/>
<rect x="747.5" y="402" width="3.5" height="4.5" fill="#444"/>
<path d="M732.5 413 L734 414.5 L735.5 413" stroke="#888" stroke-width="0.6" fill="none"/>
<circle cx="742.5" cy="413.5" r="2.5" fill="#d0d0d0"/><path d="M741 413 L742.5 414.5 L744 413" stroke="#555" stroke-width="0.6" fill="none"/>
<path d="M739.5 421.5 L741 423 L739.5 424.5" stroke="#888" stroke-width="0.6" fill="none"/>
<rect x="747" y="421" width="1.3" height="4" fill="#ddd"/><rect x="749" y="422" width="2" height="1.5" fill="#ddd"/>
</svg>

<!-- status + bottom -->
<div class="a" style="left:0;top:469px;width:880px;height:8px;background:#3b3b3b"></div>
<div class="a" style="left:0;top:477px;width:880px;height:18px;background:#111"></div>


<div class="a" style="left:722.5px;top:472.5px;width:12.5px;height:4px;background:#505050"></div>
<!-- watermark -->
<div class="a" style="left:735px;top:449px;width:138px;height:40px;border-radius:3px;background:linear-gradient(#f0f0f0,#e8e8e8)"></div>
<svg class="a" style="left:735px;top:449px" width="138" height="40" viewBox="735 449 138 40">
<g fill="none" stroke="#1a1a1a" stroke-width="1.45" stroke-linecap="butt">
<path d="M758.45 457.08 A8.1 8.2 0 1 0 758.45 466.72"/>
<path d="M778.81 457.08 A8.3 8.2 0 1 0 780.40 461.90 H774.1"/>
<path d="M784.6 463.6 H796.4 A6 6.3 0 1 0 795.9 467.6"/>
<path d="M799.6 470.6 V457.6 M799.6 462.5 Q800.5 458.2 805.2 458.2"/>
<path d="M824.23 460.08 A6 6.2 0 1 0 824.23 467.72"/>
<ellipse cx="835.3" cy="463.9" rx="6.1" ry="6.2"/>
<path d="M846 470.6 V457.6 M846 462.5 Q846.6 458.1 850.4 458.1 Q854.8 458.1 854.8 462.5 V470.6 M854.8 462.5 Q855.4 458.1 859.2 458.1 Q863.6 458.1 863.6 462.5 V470.6"/>
</g>
<circle cx="809" cy="469.4" r="1" fill="#1a1a1a"/>
<g fill="none" stroke="#2e2e2e" stroke-width="1.1">
<path d="M765.14 477.89 A4.1 3.9 0 1 0 765.14 482.91"/><path d="M775.14 477.89 A4.1 3.9 0 1 0 776.10 480.40 H772.3"/><path d="M814.94 477.89 A4.1 3.9 0 1 0 814.94 482.91"/><path d="M824.84 477.89 A4.1 3.9 0 1 0 825.80 480.40 H822"/>
</g>
<g fill="none" stroke="#2a2a2a" stroke-linecap="square"><path transform="translate(778.4 475) scale(1.03 1.09)" d="M0.8 0.8 L1.9 1.9 M0.4 4.3 L2.2 2.9 M4.2 0.3 L3.2 2.6 M3.9 1.4 H8.9 L8 2.6 M6.2 1.6 Q5.5 3.6 3.3 4.6 M6.3 2.8 Q7.5 4 9.7 4.5 M2.6 5.2 V8.1 M2.6 5.2 H7.6 V8.1 M5.1 5.7 V7.5 M4.6 8.2 Q3.5 9.3 1.6 9.9 M5.6 8.2 Q7 9.3 8.8 9.9" vector-effect="non-scaling-stroke" stroke-width="1.35"/><path transform="translate(789.6 475) scale(1.05 1.09)" d="M0.6 0.9 L1.6 2 M0.3 3.9 L1.4 4.9 M0.3 9.4 L1.8 6.6 M3 1.1 H9.8 M3.4 1.1 V5.5 Q3.3 8.5 2.3 9.9 M6.4 1.2 L5.8 2.5 M4.9 2.8 H8.8 V6.1 H4.9 Z M4.9 4.4 H8.8 M6.85 6.1 V9.3 Q6.85 9.9 6.2 9.8 M5.3 7.4 L4.3 9 M8.5 7.4 L9.5 9" vector-effect="non-scaling-stroke" stroke-width="1.35"/><path transform="translate(827.8 475.1) scale(0.92 1.03)" d="M1.1 9.9 V1.1 H8.9 V9.2 Q8.9 9.9 8 9.7 M2.6 3 L4.9 7.2 M4.9 3 L2.4 7.6 M5.4 3 L7.7 7.2 M7.7 3 L5.2 7.6" vector-effect="non-scaling-stroke" stroke-width="1.35"/><path transform="translate(839.6 475) scale(1.03 1.09)" d="M2.4 0.3 V1.6 M0.5 2 H4.5 M1.3 3.6 L1.9 6.2 M3.8 3.6 L3.1 6.2 M0.3 7.6 L4.6 7.1 M7 0.3 V5.2 M7 2.8 H9.6 M5.4 5.3 V9.7 M5.4 5.3 H9.5 V9.7 M5.4 9.4 H9.5" vector-effect="non-scaling-stroke" stroke-width="1.35"/></g>
</svg>

</body></html>
